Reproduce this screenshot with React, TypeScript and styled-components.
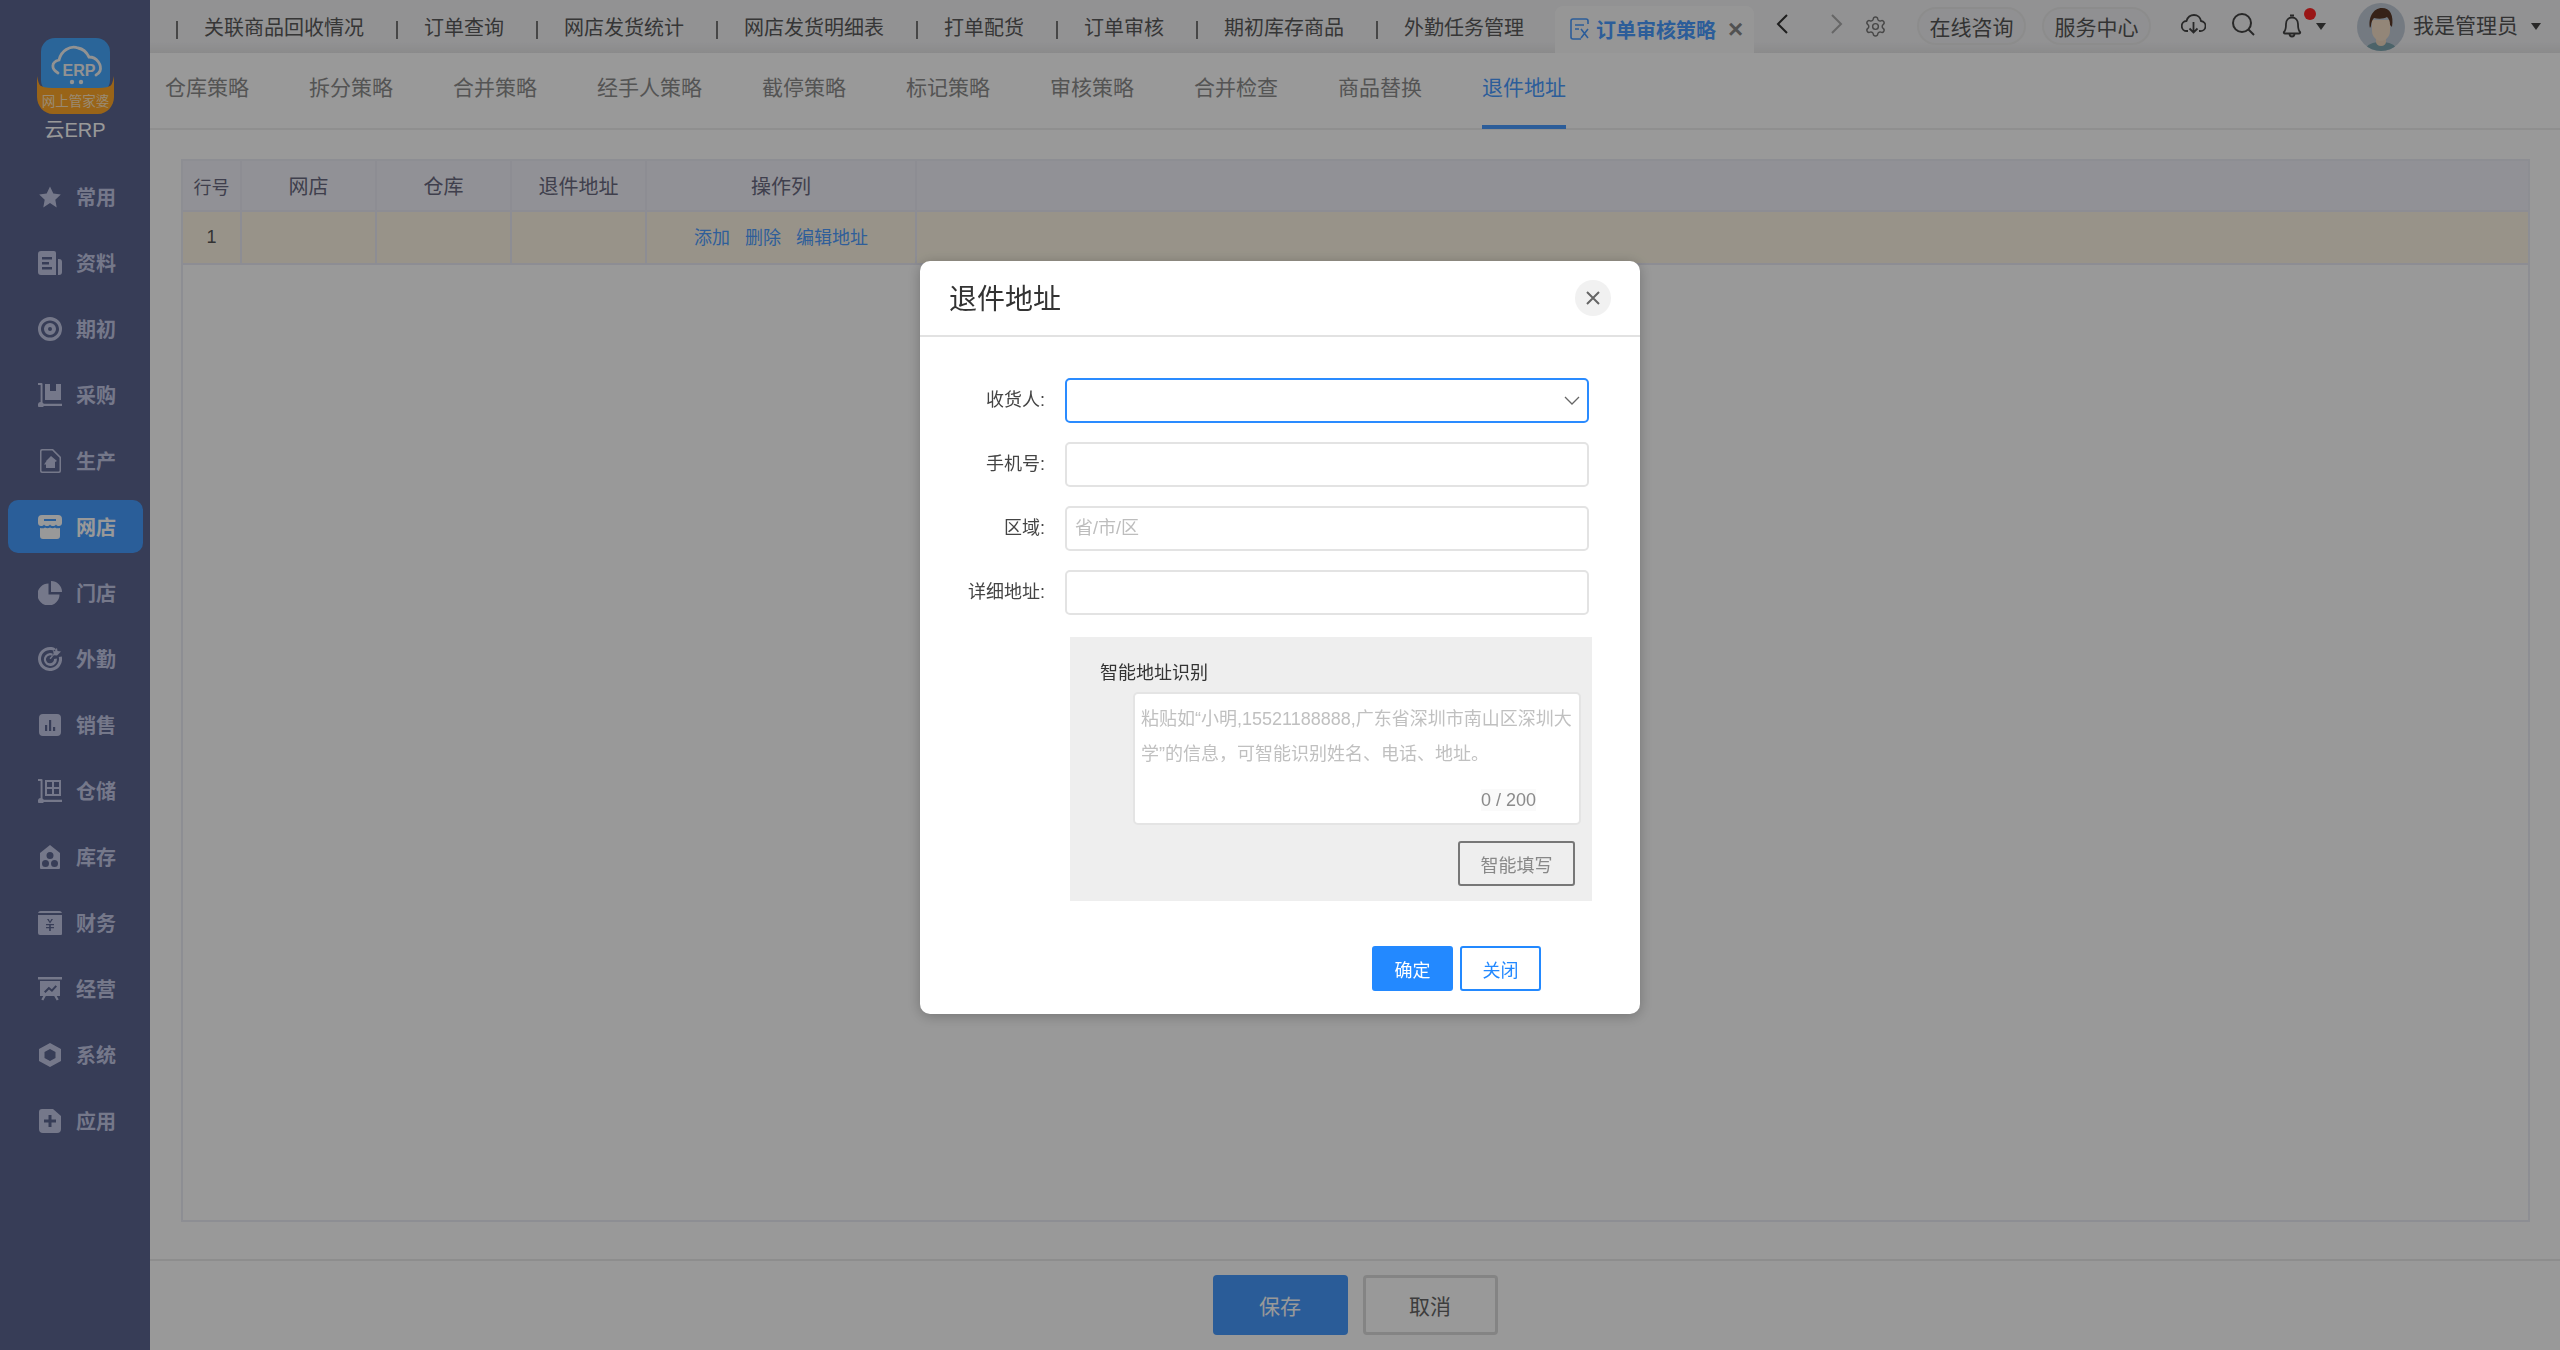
import React from "react";
import styled, { createGlobalStyle } from "styled-components";
import { Settings } from "lucide-react";

const Global = createGlobalStyle`
  html, body { margin: 0; padding: 0; width: 2560px; height: 1350px; overflow: hidden; background: #fff; }
  * { box-sizing: border-box; }
  body, input, textarea, button { font-family: "Liberation Sans", "Noto Sans CJK SC", sans-serif; }
`;

const Page = styled.div`
  display: flex;
  width: 2560px;
  height: 1350px;
  overflow: hidden;
`;

const Sidebar = styled.aside`
  width: 150px;
  flex: none;
  background: #5c6691;
  display: flex;
  flex-direction: column;
`;

const Brand = styled.div`
  height: 170px;
  padding-top: 38px;
  display: flex;
  flex-direction: column;
  align-items: center;
`;

const LogoSvg = styled.svg`
  width: 77px;
  height: 76px;
  display: block;
`;

const BrandName = styled.div`
  color: #fff;
  font-size: 20px;
  line-height: 26px;
  margin-top: 3px;
`;

const NavList = styled.nav`
  display: flex;
  flex-direction: column;
  gap: 13px;
  padding: 0 7px 0 8px;
`;

const NavItem = styled.div<{ $active?: boolean }>`
  height: 53px;
  display: flex;
  align-items: center;
  gap: 14px;
  padding-left: 30px;
  border-radius: 10px;
  background: ${(p) => (p.$active ? "#469dff" : "transparent")};
  color: ${(p) => (p.$active ? "#fff" : "#c4c9e6")};
  font-size: 20px;
  font-weight: 700;
`;

const NavIcon = styled.svg`
  width: 24px;
  height: 24px;
  flex: none;
  fill: currentColor;
`;

const Main = styled.main`
  flex: 1;
  min-width: 0;
  display: flex;
  flex-direction: column;
`;

const TopBar = styled.header`
  height: 53px;
  flex: none;
  display: flex;
  align-items: stretch;
  padding-left: 26px;
  background: linear-gradient(180deg, #f3f3f5 0, #f3f3f5 42px, #e7e7e8 53px);
  color: #5a5a5a;
  font-size: 20px;
`;

const OpenTab = styled.div`
  display: flex;
  align-items: center;
  height: 53px;
  padding: 0 32px 0 28px;
  position: relative;
  white-space: nowrap;
  &::before {
    content: "";
    width: 2px;
    height: 18px;
    background: #777;
    position: absolute;
    left: 0;
    top: 21px;
  }
`;

const ActiveTab = styled.div`
  margin: 6px 0 0 -1px;
  width: 199px;
  flex: none;
  height: 47px;
  background: #fbfbfb;
  border-radius: 8px 8px 0 0;
  display: flex;
  align-items: center;
  padding: 0 0 1px 15px;
  color: #4a9bff;
  font-weight: 700;
  white-space: nowrap;
`;

const TabDocIcon = styled.svg`
  width: 19px;
  height: 22px;
  margin-right: 7px;
  flex: none;
`;

const TabClose = styled.span`
  color: #888;
  font-size: 26px;
  line-height: 26px;
  font-weight: 700;
  margin-left: 12px;
`;

const ToolIcon = styled.svg<{ $w: number; $l: number }>`
  width: ${(p) => p.$w}px;
  height: 24px;
  margin-left: ${(p) => p.$l}px;
  flex: none;
  align-self: center;
  margin-top: -6px;
  fill: none;
  stroke: currentColor;
`;

const GearIcon = styled(Settings)`
  width: 23px;
  height: 23px;
  margin-left: 20px;
  flex: none;
  align-self: center;
  margin-top: -1px;
  color: #777;
`;

const Pill = styled.div<{ $l: number }>`
  width: 109px;
  height: 38px;
  margin: 7px 0 0 ${(p) => p.$l}px;
  border: 2px solid #eaeaea;
  border-radius: 19px;
  background: #f1f1f3;
  display: flex;
  align-items: center;
  justify-content: center;
  font-size: 21px;
  color: #555;
  white-space: nowrap;
  flex: none;
`;

const BellWrap = styled.div`
  position: relative;
  width: 20px;
  height: 24px;
  margin: 14px 0 0 27px;
  flex: none;
`;

const BellSvg = styled.svg`
  display: block;
  width: 20px;
  height: 24px;
  fill: none;
  stroke: #444;
`;

const RedDot = styled.span`
  position: absolute;
  left: 22px;
  top: -6px;
  width: 12px;
  height: 12px;
  border-radius: 50%;
  background: #ff2626;
`;

const Caret = styled.span<{ $l: number }>`
  width: 0;
  height: 0;
  border-left: 5px solid transparent;
  border-right: 5px solid transparent;
  border-top: 7px solid #444;
  margin: 23px 0 0 ${(p) => p.$l}px;
  flex: none;
`;

const AvatarSvg = styled.svg`
  width: 48px;
  height: 48px;
  margin: 3px 0 0 31px;
  flex: none;
  display: block;
`;

const UserName = styled.div`
  font-size: 21px;
  color: #555;
  margin-left: 8px;
  line-height: 52px;
  white-space: nowrap;
  width: 105px;
  flex: none;
`;

const SubTabs = styled.div`
  height: 77px;
  flex: none;
  display: flex;
  gap: 60px;
  border-bottom: 2px solid #eeeeee;
  padding-left: 15px;
  background: #fff;
`;

const SubTab = styled.div<{ $active?: boolean }>`
  height: 75px;
  position: relative;
  font-size: 21px;
  line-height: 69px;
  color: ${(p) => (p.$active ? "#4a9bff" : "#8c8c8c")};
  white-space: nowrap;
  ${(p) =>
    p.$active
      ? `&::after { content: ""; position: absolute; left: 0; right: 0; bottom: -1px; height: 4px; background: #4a9bff; }`
      : ""}
`;

const Content = styled.div`
  flex: 1;
  min-height: 0;
  padding: 29px 30px 0 31px;
  background: #fff;
`;

const TableFrame = styled.div`
  height: 1063px;
  border: 2px solid #ecedf5;
  background: #fff;
`;

const Table = styled.table`
  width: 100%;
  table-layout: fixed;
  border-collapse: separate;
  border-spacing: 0;
`;

const Th = styled.th<{ $w?: number; $small?: boolean }>`
  width: ${(p) => (p.$w ? `${p.$w}px` : "auto")};
  height: 51px;
  background: #f2f2fa;
  border-right: 2px solid #ebebf5;
  border-bottom: 2px solid #ebebf5;
  font-size: ${(p) => (p.$small ? 18 : 20)}px;
  font-weight: 400;
  color: #6a6a80;
  padding: 0;
  &:last-child { border-right: 0; }
`;

const Td = styled.td`
  height: 53px;
  background: #fdf6e5;
  border-right: 2px solid #ebebf5;
  border-bottom: 2px solid #ebebf5;
  font-size: 18px;
  color: #555;
  text-align: center;
  padding: 0;
  &:last-child { border-right: 0; }
`;

const LinkRow = styled.div`
  display: flex;
  justify-content: center;
  gap: 15px;
  color: #4f9dff;
  margin-top: -3px;
`;

const Footer = styled.footer`
  height: 91px;
  flex: none;
  display: flex;
  justify-content: center;
  gap: 15px;
  padding-top: 14px;
  border-top: 2px solid #ececec;
  background: #fff;
`;

const BigButton = styled.button<{ $primary?: boolean }>`
  width: 135px;
  height: 60px;
  border-radius: 4px;
  font-size: 21px;
  border: ${(p) => (p.$primary ? "0" : "3px solid #dcdcdc")};
  background: ${(p) => (p.$primary ? "#4699fd" : "#fff")};
  color: ${(p) => (p.$primary ? "#fff" : "#666")};
`;

const Mask = styled.div`
  position: fixed;
  inset: 0;
  background: rgba(0, 0, 0, 0.4);
`;

const Modal = styled.div`
  position: fixed;
  left: 920px;
  top: 261px;
  width: 720px;
  background: #fff;
  border-radius: 10px;
  box-shadow: 0 2px 14px rgba(0, 0, 0, 0.25);
`;

const ModalHeader = styled.div`
  height: 76px;
  border-bottom: 2px solid #e2e2e2;
  display: flex;
  align-items: center;
  justify-content: space-between;
  padding: 0 29px 0 29px;
`;

const ModalTitle = styled.div`
  font-size: 28px;
  color: #333;
  margin-top: -2px;
`;

const CloseBtn = styled.div`
  width: 36px;
  height: 36px;
  border-radius: 50%;
  background: #f1f1f1;
  display: flex;
  align-items: center;
  justify-content: center;
`;

const CloseSvg = styled.svg`
  width: 14px;
  height: 14px;
  stroke: #666;
  stroke-width: 2;
`;

const ModalBody = styled.div`
  padding: 41px 0 23px;
`;

const FormRow = styled.div`
  display: flex;
  align-items: center;
  height: 45px;
  margin-bottom: 19px;
`;

const FormLabel = styled.label`
  width: 125px;
  text-align: right;
  font-size: 18px;
  color: #444;
  margin-right: 20px;
  margin-top: -6px;
  flex: none;
`;

const InputBox = styled.div`
  position: relative;
  width: 524px;
  height: 45px;
`;

const TextInput = styled.input<{ $focus?: boolean }>`
  width: 100%;
  height: 100%;
  border: 2px solid ${(p) => (p.$focus ? "#2a8bff" : "#e3e3e3")};
  border-radius: 5px;
  outline: none;
  padding: 0 8px;
  font-size: 18px;
  color: #333;
  background: #fff;
  &::placeholder { color: #bdbdbd; opacity: 1; }
`;

const Chevron = styled.svg`
  position: absolute;
  right: 9px;
  top: 18px;
  width: 16px;
  height: 9px;
  fill: none;
  stroke: #666;
  stroke-width: 1.3;
`;

const SmartPanel = styled.div`
  margin: 22px 48px 0 150px;
  height: 264px;
  background: #eeeeee;
  padding: 22px 17px 15px 30px;
  display: flex;
  flex-direction: column;
`;

const SmartTitle = styled.div`
  font-size: 18px;
  line-height: 28px;
  color: #333;
  margin-bottom: 5px;
`;

const AreaBox = styled.div`
  position: relative;
  width: 448px;
  height: 133px;
  margin-left: 33px;
`;

const TextArea = styled.textarea`
  display: block;
  width: 100%;
  height: 100%;
  resize: none;
  border: 2px solid #e4e4e4;
  border-radius: 5px;
  outline: none;
  padding: 8px 6px;
  font-size: 18px;
  line-height: 35px;
  background: #fff;
  overflow: hidden;
  &::placeholder { color: #c0c0c0; opacity: 1; }
`;

const Counter = styled.span`
  position: absolute;
  right: 45px;
  bottom: 14px;
  font-size: 18px;
  line-height: 22px;
  color: #8a8a8a;
  background: #fafafa;
`;

const SmartButton = styled.button`
  align-self: flex-end;
  margin-top: 16px;
  width: 117px;
  height: 45px;
  border: 2px solid #777;
  border-radius: 3px;
  background: transparent;
  font-size: 18px;
  color: #888;
  padding: 0;
`;

const ModalFooter = styled.div`
  display: flex;
  justify-content: flex-end;
  gap: 7px;
  padding-right: 99px;
  margin-top: 45px;
`;

const DlgButton = styled.button<{ $primary?: boolean }>`
  width: 81px;
  height: 45px;
  border-radius: 3px;
  border: 2px solid #2389ff;
  background: ${(p) => (p.$primary ? "#2389ff" : "#fff")};
  color: ${(p) => (p.$primary ? "#fff" : "#2389ff")};
  font-size: 18px;
  padding: 0;
`;

const navIcons: Record<string, React.ReactNode> = {
  star: <path d="M12 1.5l3.3 7 7.5 1-5.5 5.3 1.4 7.7L12 18l-6.7 4.5 1.4-7.7L1.2 9.5l7.5-1z" />,
  doc: <path fillRule="evenodd" d="M3 0h13a2 2 0 0 1 2 2v22H3a3 3 0 0 1-3-3V3a3 3 0 0 1 3-3zm1 6v2.5h10V6zm0 5v2.5h7V11zm0 5v2.5h10V16zM20 8h1a3 3 0 0 1 3 3v10a3 3 0 0 1-3 3h-1z" />,
  ring: <path fillRule="evenodd" d="M12 0a12 12 0 1 1 0 24 12 12 0 0 1 0-24zm0 3.4C6.9 3.4 3 7.400 3 12s3.900 8.600 9 8.600 9-4 9-8.600-3.900-8.600-9-8.600zM12 6a6 6 0 1 1 0 12 6 6 0 0 1 0-12zm0 4a2 2 0 1 0 0 4 2 2 0 0 0 0-4z" />,
  cart: <path fillRule="evenodd" d="M0 0h3.500a1 1 0 0 1 1 1v18.500a3 3 0 0 1 1.200 1.200H24V23H5.700A3 3 0 1 1 2.600 19V2H0zM7 1h16v16H7zm5 0v7h6V1z" />,
  file: <path fillRule="evenodd" d="M4 0h11l8 8v14a2 2 0 0 1-2 2H4a2 2 0 0 1-2-2V2a2 2 0 0 1 2-2zm.500 1.500A1 1 0 0 0 3.500 2.500v19a1 1 0 0 0 1 1h16a1 1 0 0 0 1-1V8.800l-7.300-7.300zM13 7l6 5-2 1v6h-9v-3.500H6l2.500-3.500H8z" />,
  shop: <path fillRule="evenodd" d="M4 0h16a4 4 0 0 1 4 4v4c0 2-1.500 3-3 3-1.200 0-2.500-.6-3-1.600-.6 1-1.800 1.600-3 1.600s-2.400-.6-3-1.600c-.6 1-1.800 1.600-3 1.600s-2.400-.6-3-1.600C5.500 10.400 4.200 11 3 11 1.500 11 0 10 0 8V4a4 4 0 0 1 4-4zm2 4v2h12V4zM2 13c2 .5 4 .3 5-.6 1.500 1 3.500 1 5 0 1.500 1 3.500 1 5 0 1 .9 3 1.100 5 .6v8a3 3 0 0 1-3 3H5a3 3 0 0 1-3-3z" />,
  pie: <path d="M10.500 2.500v11h11A11 11 0 1 1 10.500 2.500zM13 0a11 11 0 0 1 11 11H13z" />,
  target: <path fillRule="evenodd" d="M12 0c2 0 3.800.5 5.400 1.400l-.3 3.100A9 9 0 1 0 20.800 10l3-.4A12 12 0 1 1 12 0zm0 6c.9 0 1.800.2 2.600.6v2.700A4 4 0 1 0 16 12l2.800-.4A6.500 6.500 0 1 1 12 6zm7-5l.5 3 3.500.5-4 4-3.200-.3L12.700 12.300l-1.200-1.100 4.100-4.100-.4-3z" />,
  bars: <path fillRule="evenodd" d="M5 1h14a4 4 0 0 1 4 4v14a4 4 0 0 1-4 4H5a4 4 0 0 1-4-4V5a4 4 0 0 1 4-4zm2 11v6h2.200v-6zm4-5v11h2.200V7zm4 7v4h2.200v-4z" />,
  store: <path fillRule="evenodd" d="M0 0h3.500a1 1 0 0 1 1 1v18.500a3 3 0 0 1 1.200 1.200H24V23H5.700A3 3 0 1 1 2.600 19V2H0zM7 1h16v16H7zm2 2v5h5V3zm7 0v5h5V3zM9 10v5h5v-5zm7 0v5h5v-5z" />,
  house: <path fillRule="evenodd" d="M12 0l10 8v15a1 1 0 0 1-1 1H3a1 1 0 0 1-1-1V8zm0 7a3.500 3.500 0 1 0 0 7 3.500 3.500 0 0 0 0-7zM7.500 15a3.500 3.500 0 1 0 0 7 3.500 3.500 0 0 0 0-7zm9 0a3.500 3.500 0 1 0 0 7 3.500 3.500 0 0 0 0-7z" />,
  wallet: <path fillRule="evenodd" d="M3 0h18a3 3 0 0 1 3 2H0a3 3 0 0 1 3-2zM0 4h24v19a1 1 0 0 1-1 1H2a2 2 0 0 1-2-2zm9 4l3 4.500L15 8h-1.600L12 10.500 10.600 8zm2.200 5H8v1.200h3.200V16H8v1.200h3.200V20h1.600v-2.800H16V16h-3.200v-1.800H16V13z" />,
  board: <path fillRule="evenodd" d="M0 0h24v2.500H0zM2 4h20v15h-3.300l2 3.500-2 1-2.500-4.500H7.800l-2.500 4.500-2-1 2-3.500H2zm4 10.500l1.500 1.500 3.500-3.500 3 2.500 5-5.500-1.500-1.300-3.700 4-3-2.500-4.800 4.800z" />,
  hex: <path fillRule="evenodd" d="M12 0l11 6v12l-11 6-11-6V6zm0 6L6.500 9v6l5.500 3 5.500-3V9z" />,
  plus: <path fillRule="evenodd" d="M4 0h11l8 7v13a4 4 0 0 1-4 4H5a4 4 0 0 1-4-4V3a3 3 0 0 1 3-3zm6.500 6v4.500H6v3h4.500V18h3v-4.500H18v-3h-4.500V6z" />,
};

const navItems: [string, string][] = [
  ["常用", "star"], ["资料", "doc"], ["期初", "ring"], ["采购", "cart"], ["生产", "file"],
  ["网店", "shop"], ["门店", "pie"], ["外勤", "target"], ["销售", "bars"], ["仓储", "store"],
  ["库存", "house"], ["财务", "wallet"], ["经营", "board"], ["系统", "hex"], ["应用", "plus"],
];

const openTabs = ["关联商品回收情况", "订单查询", "网店发货统计", "网店发货明细表", "打单配货", "订单审核", "期初库存商品", "外勤任务管理"];
const subTabs = ["仓库策略", "拆分策略", "合并策略", "经手人策略", "截停策略", "标记策略", "审核策略", "合并检查", "商品替换", "退件地址"];

const Logo = () => (
  <LogoSvg viewBox="0 0 77 76">
    <rect x="4" y="0" width="69" height="56" rx="14" fill="#46a9ff" />
    <path d="M0 38c1 5 2 9 4 10 4 2 10 2 16 2h37c6 0 12 0 16-2 2-1 3-5 4-10v21c0 9-7 17-16 17H16C7 76 0 68 0 59z" fill="#ffa728" />
    <path d="M21 35C14 31 14 24 22 22 24 13 33 7 41 10c6 1 9 5 11 9 8 0 13 8 11 14-1 2-2 3-4 4" fill="none" stroke="#f4f4f4" strokeWidth="2.800" strokeLinecap="round" />
    <text x="42" y="38" textAnchor="middle" fontSize="16" fontWeight="700" fill="#f4f4f4" fontFamily="Liberation Sans, sans-serif">ERP</text>
    <circle cx="35" cy="44" r="2.200" fill="#f4f4f4" />
    <circle cx="44" cy="44" r="2.200" fill="#f4f4f4" />
    <text x="38.500" y="68" textAnchor="middle" fontSize="13.500" fill="#ffe6c0" fontFamily="Noto Sans CJK SC, sans-serif">网上管家婆</text>
  </LogoSvg>
);

const Avatar = () => (
  <AvatarSvg viewBox="0 0 48 48">
    <defs>
      <clipPath id="av"><circle cx="24" cy="24" r="24" /></clipPath>
    </defs>
    <g clipPath="url(#av)">
      <rect width="48" height="48" fill="#c2ccd8" />
      <path d="M8 48c1-7 8-9 16-9s15 2 16 9z" fill="#7fa6b0" />
      <path d="M19 30h10v9c0 2-2 4-5 4s-5-2-5-4z" fill="#f0d9c0" />
      <path d="M15 17h18v11c0 6-5 10-9 10s-9-4-9-10z" fill="#f5e0c8" />
      <path d="M13 25c-2-10 3-20 12-20 8 0 12 7 10 19l-2-2c0-4-1-6-3-8-3 2-9 2-13 1-2 2-3 5-3 8z" fill="#5a3a28" />
    </g>
  </AvatarSvg>
);

export default function App() {
  return (
    <>
      <Global />
      <Page>
        <Sidebar>
          <Brand>
            <Logo />
            <BrandName>云ERP</BrandName>
          </Brand>
          <NavList>
            {navItems.map(([label, icon]) => (
              <NavItem key={label} $active={label === "网店"}>
                <NavIcon viewBox="0 0 24 24">{navIcons[icon]}</NavIcon>
                {label}
              </NavItem>
            ))}
          </NavList>
        </Sidebar>
        <Main>
          <TopBar>
            {openTabs.map((t) => (
              <OpenTab key={t}>{t}</OpenTab>
            ))}
            <ActiveTab>
              <TabDocIcon viewBox="0 0 19 22" fill="none" stroke="#4a9bff" strokeWidth="1.600">
                <path d="M18 6V3a2 2 0 0 0-2-2H3a2 2 0 0 0-2 2v16a2 2 0 0 0 2 2h8" />
                <path d="M5 7h9M5 11h4" />
                <path d="M11 11l7 9M18 11l-7 9" />
              </TabDocIcon>
              订单审核策略
              <TabClose>×</TabClose>
            </ActiveTab>
            <ToolIcon $w={14} $l={21} viewBox="0 0 14 24" strokeWidth="2" style={{ color: "#333" }}>
              <path d="M12 3L3 12l9 9" />
            </ToolIcon>
            <ToolIcon $w={14} $l={41} viewBox="0 0 14 24" strokeWidth="2" style={{ color: "#aaa" }}>
              <path d="M2 3l9 9-9 9" />
            </ToolIcon>
            <GearIcon strokeWidth={1.5} />
            <Pill $l={30}>在线咨询</Pill>
            <Pill $l={16}>服务中心</Pill>
            <ToolIcon $w={25} $l={30} viewBox="0 0 25 20" strokeWidth="1.800" style={{ color: "#444" }}>
              <path d="M7 17H6a5 5 0 0 1-.5-10C6.500 3.500 9.500 1 13 1s6.500 2.500 7 6a5 5 0 0 1-1 10h-1" />
              <path d="M12.500 8v10M8.500 14.500l4 4 4-4" />
            </ToolIcon>
            <ToolIcon $w={24} $l={25} viewBox="0 0 24 24" strokeWidth="2" style={{ color: "#444" }}>
              <circle cx="11" cy="11" r="9" />
              <path d="M17.500 17.500L23 23" />
            </ToolIcon>
            <BellWrap>
              <BellSvg viewBox="0 0 20 24" strokeWidth="1.800">
                <path d="M2 18c2-2 2-4 2-8 0-4 2.500-6.500 6-6.500s6 2.500 6 6.500c0 4 0 6 2 8 .5.500 0 1.500-1 1.500H3c-1 0-1.500-1-1-1.500z" />
                <path d="M8 1.500h4M7.500 19.500c0 2 1 3 2.500 3s2.500-1 2.500-3" />
              </BellSvg>
              <RedDot />
            </BellWrap>
            <Caret $l={14} />
            <Avatar />
            <UserName>我是管理员</UserName>
            <Caret $l={13} />
          </TopBar>
          <SubTabs>
            {subTabs.map((t) => (
              <SubTab key={t} $active={t === "退件地址"}>{t}</SubTab>
            ))}
          </SubTabs>
          <Content>
            <TableFrame>
              <Table>
                <thead>
                  <tr>
                    <Th $w={59} $small>行号</Th>
                    <Th $w={135}>网店</Th>
                    <Th $w={135}>仓库</Th>
                    <Th $w={135}>退件地址</Th>
                    <Th $w={270}>操作列</Th>
                    <Th />
                  </tr>
                </thead>
                <tbody>
                  <tr>
                    <Td>1</Td>
                    <Td />
                    <Td />
                    <Td />
                    <Td>
                      <LinkRow>
                        <span>添加</span>
                        <span>删除</span>
                        <span>编辑地址</span>
                      </LinkRow>
                    </Td>
                    <Td />
                  </tr>
                </tbody>
              </Table>
            </TableFrame>
          </Content>
          <Footer>
            <BigButton $primary>保存</BigButton>
            <BigButton>取消</BigButton>
          </Footer>
        </Main>
      </Page>
      <Mask />
      <Modal>
        <ModalHeader>
          <ModalTitle>退件地址</ModalTitle>
          <CloseBtn>
            <CloseSvg viewBox="0 0 14 14"><path d="M1 1l12 12M13 1L1 13" /></CloseSvg>
          </CloseBtn>
        </ModalHeader>
        <ModalBody>
          <FormRow>
            <FormLabel>收货人:</FormLabel>
            <InputBox>
              <TextInput $focus readOnly />
              <Chevron viewBox="0 0 16 9"><path d="M1 1l7 7 7-7" /></Chevron>
            </InputBox>
          </FormRow>
          <FormRow>
            <FormLabel>手机号:</FormLabel>
            <InputBox><TextInput readOnly /></InputBox>
          </FormRow>
          <FormRow>
            <FormLabel>区域:</FormLabel>
            <InputBox><TextInput readOnly placeholder="省/市/区" /></InputBox>
          </FormRow>
          <FormRow>
            <FormLabel>详细地址:</FormLabel>
            <InputBox><TextInput readOnly /></InputBox>
          </FormRow>
          <SmartPanel>
            <SmartTitle>智能地址识别</SmartTitle>
            <AreaBox>
              <TextArea readOnly placeholder="粘贴如“小明,15521188888,广东省深圳市南山区深圳大学”的信息，可智能识别姓名、电话、地址。" />
              <Counter>0 / 200</Counter>
            </AreaBox>
            <SmartButton>智能填写</SmartButton>
          </SmartPanel>
          <ModalFooter>
            <DlgButton $primary>确定</DlgButton>
            <DlgButton>关闭</DlgButton>
          </ModalFooter>
        </ModalBody>
      </Modal>
    </>
  );
}
